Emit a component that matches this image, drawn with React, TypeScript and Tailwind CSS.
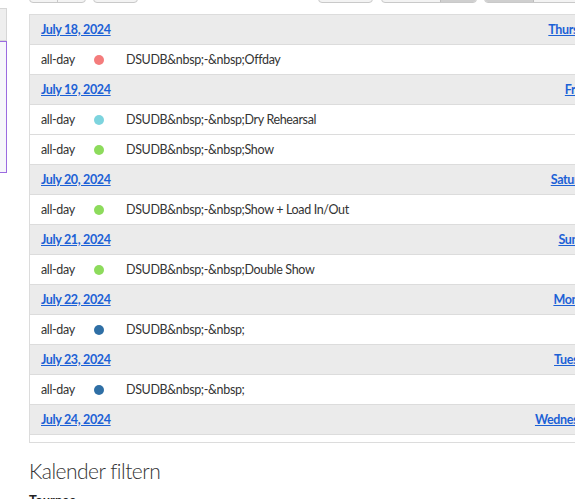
import type { ReactNode } from "react";

type CalEvent = { color: string; title: string };
type Day = { date: string; weekday: string; events: CalEvent[] };

const days: Day[] = [
  { date: "July 18, 2024", weekday: "Thursday", events: [{ color: "bg-[#f47c7c]", title: "DSUDB&nbsp;-&nbsp;Offday" }] },
  {
    date: "July 19, 2024",
    weekday: "Friday",
    events: [
      { color: "bg-[#7dd4de]", title: "DSUDB&nbsp;-&nbsp;Dry Rehearsal" },
      { color: "bg-[#8ddb5c]", title: "DSUDB&nbsp;-&nbsp;Show" },
    ],
  },
  { date: "July 20, 2024", weekday: "Saturday", events: [{ color: "bg-[#8ddb5c]", title: "DSUDB&nbsp;-&nbsp;Show + Load In/Out" }] },
  { date: "July 21, 2024", weekday: "Sunday", events: [{ color: "bg-[#8ddb5c]", title: "DSUDB&nbsp;-&nbsp;Double Show" }] },
  { date: "July 22, 2024", weekday: "Monday", events: [{ color: "bg-[#2f6fa5]", title: "DSUDB&nbsp;-&nbsp;" }] },
  { date: "July 23, 2024", weekday: "Tuesday", events: [{ color: "bg-[#2f6fa5]", title: "DSUDB&nbsp;-&nbsp;" }] },
  { date: "July 24, 2024", weekday: "Wednesday", events: [] },
];

const ButtonStub = ({ className, children }: { className: string; children?: ReactNode }) => (
  <div className={`h-[30px] flex rounded-b-[4px] border border-[#c9c9c9] bg-[#f3f3f3] overflow-hidden ${className}`}>
    {children}
  </div>
);

const DayHeader = ({ day }: { day: Day }) => (
  <div className="h-[30px] flex items-center justify-between pt-[1px] px-[11px] bg-[#ebebeb] border-b border-[#dcdcdc]">
    <a href="#" className="font-bold underline text-[#1c61d6]">
      {day.date}
    </a>
    <a href="#" className="font-bold underline text-[#1c61d6]">
      {day.weekday}
    </a>
  </div>
);

const EventRow = ({ event }: { event: CalEvent }) => (
  <div className="h-[30px] flex items-center pt-[1px] px-[11px] bg-white border-b border-[#dcdcdc] text-[#333]">
    <span className="w-[53px]">all-day</span>
    <span className={`w-[10px] h-[10px] rounded-full ${event.color}`} />
    <span className="ml-[22px]">{event.title}</span>
  </div>
);

export default function App() {
  return (
    <div className="w-[575px] h-[499px] overflow-hidden bg-white font-['Lato','Liberation_Sans',sans-serif] text-[12.5px] tracking-[-0.35px] text-[#333]">
      <div className="flex">
        {/* clipped sidebar */}
        <aside className="w-[7px] shrink-0 pt-[8px]">
          <div className="h-[33px] bg-[#eeeeee] border-y border-r border-[#d6d6d6]" />
          <div className="h-[132px] bg-[#f6f6fa] border border-l-0 border-[#9b6be0]" />
        </aside>

        <main className="ml-[22px] w-[580px] shrink-0">
          {/* toolbar, scrolled mostly out of view */}
          <div className="mt-[-27px] h-[30px] flex">
            <ButtonStub className="w-[57px]">
              <div className="w-[28px] border-r border-[#c9c9c9]" />
            </ButtonStub>
            <ButtonStub className="w-[45px] ml-[7px]" />
            <ButtonStub className="w-[55px] ml-[180px]" />
            <ButtonStub className="w-[96px] ml-[8px]">
              <div className="w-[58px]" />
              <div className="flex-1 bg-[#cfcfcf] border-l border-[#bdbdbd]" />
            </ButtonStub>
            <ButtonStub className="w-[120px] ml-[7px]">
              <div className="w-[49px] bg-[#cfcfcf] border-r border-[#bdbdbd]" />
              <div className="flex-1" />
            </ButtonStub>
          </div>

          <div className="mt-[11px] border border-[#dcdcdc]">
            {days.map((day) => (
              <div key={day.date}>
                <DayHeader day={day} />
                {day.events.map((ev, i) => (
                  <EventRow key={i} event={ev} />
                ))}
              </div>
            ))}
            <div className="h-[7px]" />
          </div>

          <h2 className="mt-[13px] text-[21px] tracking-[-0.5px] font-light text-[#333] leading-[30px]">Kalender filtern</h2>
          <div className="mt-[5px] font-bold text-[13px] tracking-normal text-[#222]">Tournee</div>
        </main>
      </div>
    </div>
  );
}
